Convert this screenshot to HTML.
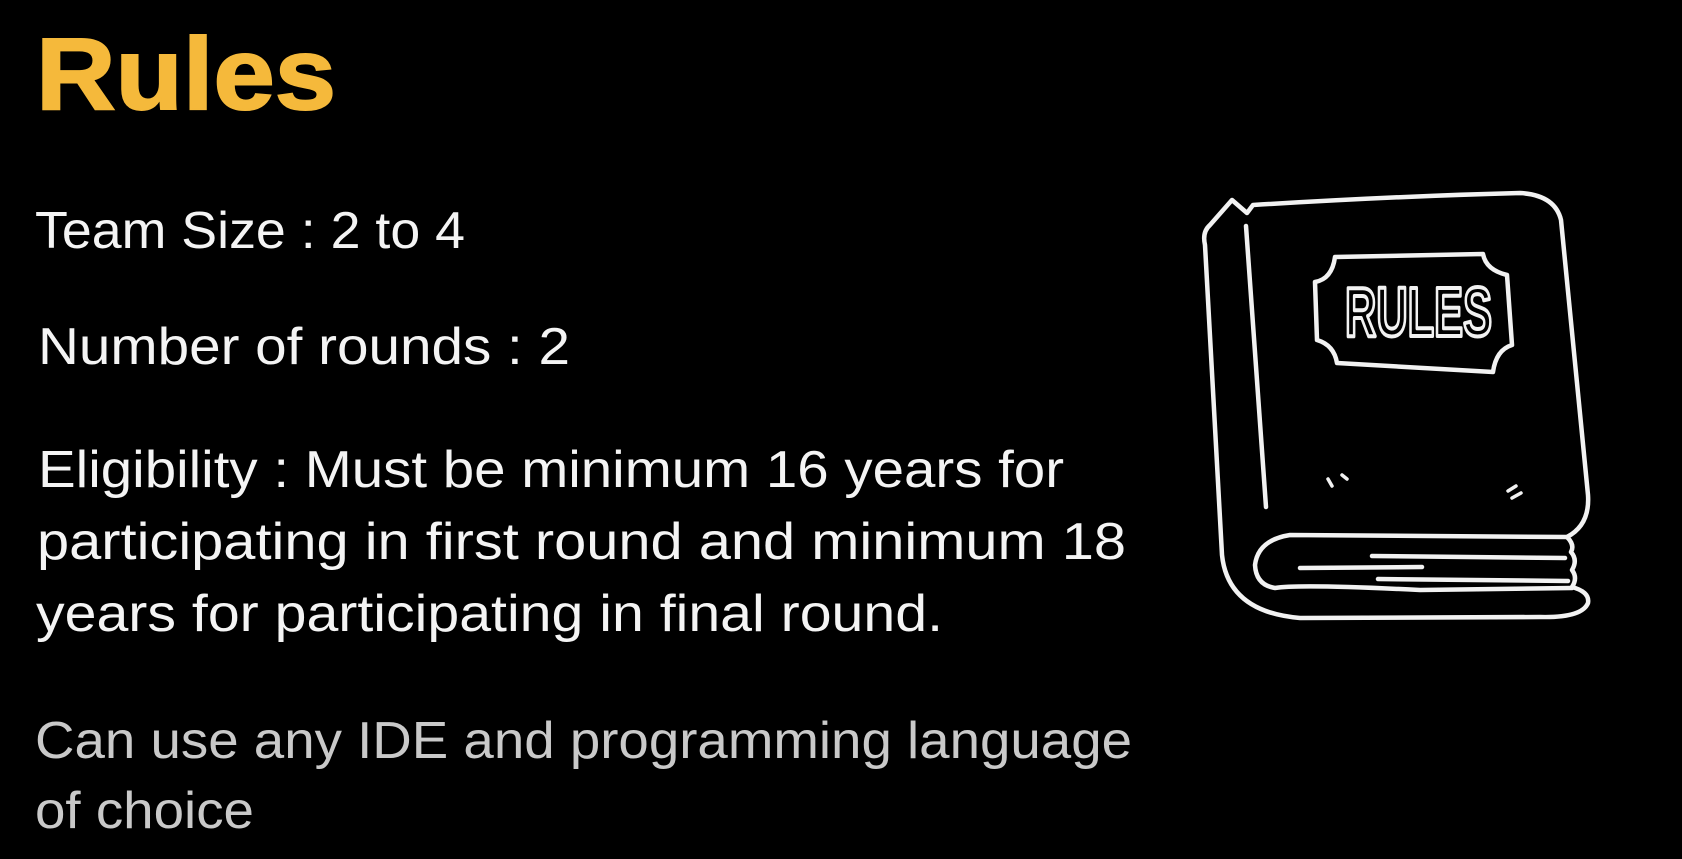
<!DOCTYPE html>
<html><head><meta charset="utf-8"><style>
html,body{margin:0;padding:0;background:#000;width:1682px;height:859px;overflow:hidden}
svg{display:block}
</style></head><body>
<svg width="1682" height="859" viewBox="0 0 1682 859" xmlns="http://www.w3.org/2000/svg">
<rect width="1682" height="859" fill="#000"/>
<g font-family="Liberation Sans, sans-serif">
<text x="36" y="109" font-size="102" font-weight="bold" fill="#f5b93b" stroke="#f5b93b" stroke-width="2" textLength="300" lengthAdjust="spacingAndGlyphs">Rules</text>
<g fill="#f4f4f4" font-size="52">
<text x="35" y="248" textLength="430" lengthAdjust="spacingAndGlyphs">Team Size : 2 to 4</text>
<text x="38" y="364" textLength="532" lengthAdjust="spacingAndGlyphs">Number of rounds : 2</text>
<text x="38" y="487" textLength="1026" lengthAdjust="spacingAndGlyphs">Eligibility : Must be minimum 16 years for</text>
<text x="37" y="559" textLength="1089" lengthAdjust="spacingAndGlyphs">participating in first round and minimum 18</text>
<text x="36" y="631" textLength="907" lengthAdjust="spacingAndGlyphs">years for participating in final round.</text>
</g>
<g fill="#c9c9c9" font-size="52">
<text x="35" y="758" textLength="1097" lengthAdjust="spacingAndGlyphs">Can use any IDE and programming language</text>
<text x="35" y="828" textLength="219" lengthAdjust="spacingAndGlyphs">of choice</text>
</g>
</g>
<g fill="none" stroke="#f2f2f2" stroke-width="4.5" stroke-linecap="round" stroke-linejoin="round">
<path d="M1253,205 Q1400,196 1520,193 Q1555,195 1561,220 L1588,495 Q1590,525 1567,537 Q1575,545 1571,552 Q1578,560 1572,570 Q1578,578 1572,587 Q1590,592 1588,603 Q1582,618 1540,617 L1300,618 Q1228,612 1222,555 L1205,245 Q1202,232 1210,225 L1232,200 L1247,213 Z"/>
<path d="M1246,226 L1266,507"/>
<path d="M1567,537 L1290,535 Q1258,540 1255,565 Q1256,585 1275,588 Q1300,584 1420,590 L1572,588"/>
<path d="M1300,568 L1422,567"/>
<path d="M1372,556 L1565,558"/>
<path d="M1378,579 L1568,581"/>
<path d="M1335,257 L1483,254 Q1486,270 1507,275 L1512,345 Q1496,350 1493,372 L1337,363 Q1334,345 1317,340 L1315,282 Q1332,279 1335,257 Z"/>
<path d="M1328,479 L1332,486 M1342,475 L1347,479 M1508,491 L1516,486 M1512,498 L1521,493" stroke-width="3.5"/>
</g>
<text x="1345" y="336" font-family="Liberation Sans, sans-serif" font-size="70" font-weight="bold" fill="#000" stroke="#f2f2f2" stroke-width="4" stroke-linejoin="round" textLength="147" lengthAdjust="spacingAndGlyphs">RULES</text>
</svg>
</body></html>
